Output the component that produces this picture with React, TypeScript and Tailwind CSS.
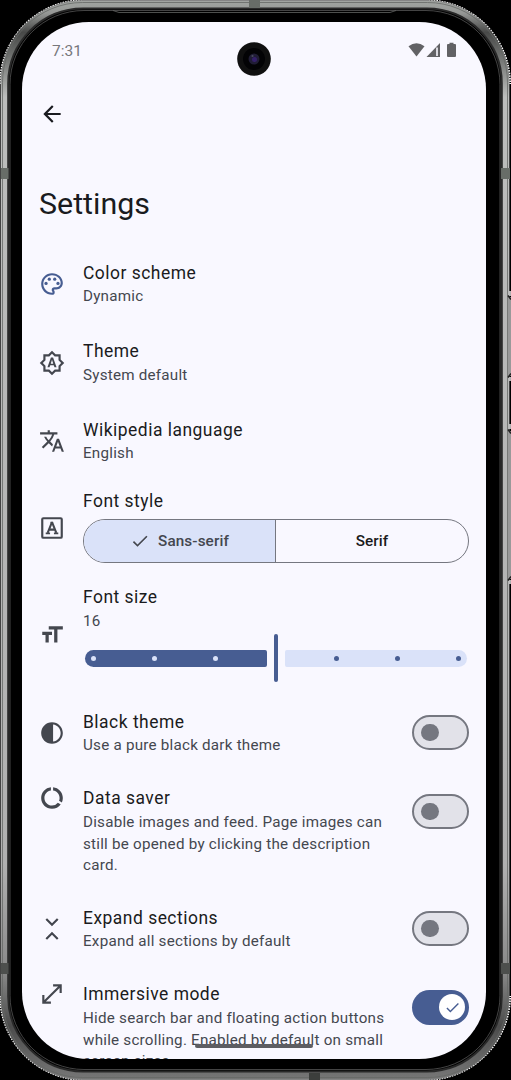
import React from "react";
import {
  MdOutlinePalette, MdOutlineBrightnessAuto, MdTranslate, MdContrast, MdDataUsage, MdArrowBack,
  MdCheck, MdFormatSize,
} from "react-icons/md";

const ink = "text-[#44474f]";

function FontBoxIcon() {
  return (
    <svg viewBox="0 0 24 24" className={`size-[26px] ${ink}`} fill="none" stroke="currentColor">
      <rect x="3" y="3" width="18" height="18" rx="1" strokeWidth="2" />
      <path d="M12 6.6 8 16.6M12 6.6l4 10M9.4 13.5h5.2" strokeWidth="1.9" />
      <path d="M6.2 17h4M13.8 17h4M10.6 7H13" strokeWidth="1.5" />
    </svg>
  );
}

function CollapseIcon() {
  return (
    <svg viewBox="0 0 24 24" className={`size-[26px] ${ink}`} fill="none" stroke="currentColor" strokeWidth="2">
      <path d="M6.7 2.7 12 8l5.3-5.3M6.7 21.3 12 16l5.3 5.3" />
    </svg>
  );
}

function FullscreenIcon() {
  return (
    <svg viewBox="0 0 24 24" className={`size-[26px] ${ink}`} fill="currentColor">
      <path d="M3 21v-8h2v4.6L17.6 5H13V3h8v8h-2V6.4L6.4 19H11v2z" />
    </svg>
  );
}

function Bezel() {
  return (
    <svg className="absolute inset-0" width="511" height="1080" viewBox="0 0 511 1080" fill="none">
      <defs>
        <linearGradient id="metal" x1="0" y1="0" x2="0" y2="1080" gradientUnits="userSpaceOnUse">
          <stop offset="0" stopColor="#a1a5a1" />
          <stop offset="0.012" stopColor="#969896" />
          <stop offset="0.03" stopColor="#484948" />
          <stop offset="0.055" stopColor="#747674" />
          <stop offset="0.09" stopColor="#bcbdbc" />
          <stop offset="0.8" stopColor="#b0b0b0" />
          <stop offset="0.9" stopColor="#898989" />
          <stop offset="0.95" stopColor="#4b4b4b" />
          <stop offset="1" stopColor="#777" />
        </linearGradient>
      </defs>
      <rect width="511" height="1080" fill="#000" />
      <path
        d="M0.6 84A83.5 83.5 0 0 1 84 0.6M426 0.6A83.5 83.5 0 0 1 509.6 84M0.6 996A83.5 83.5 0 0 0 84 1079.4M426 1079.4A83.5 83.5 0 0 0 509.6 996"
        stroke="#fff" strokeWidth="2.8" strokeDasharray="1.6 1"
      />
      <rect x="0.5" y="0" width="509" height="1080" rx="83" fill="#858585" />
      <rect x="4.5" y="4.5" width="501" height="1071" rx="78" stroke="url(#metal)" strokeWidth="7" />
      <rect x="2.5" y="2.5" width="505" height="1075" rx="80" stroke="#666866" strokeWidth="0.8" />
      <rect x="8.2" y="8.5" width="493.6" height="1063" rx="75" fill="#000" stroke="#292929" strokeWidth="2" />
      <rect x="10" y="10.5" width="490" height="1059" rx="74" stroke="#626262" strokeWidth="0.7" />
      <path d="M113 10.5l6 2h271l6-2" stroke="#626462" strokeWidth="0.8" />
      <g fill="#686d68">
        <rect x="249" width="11" height="8" />
        <rect x="1" y="168" width="7.5" height="11" />
        <rect x="501" y="168" width="9" height="11" />
        <rect x="1" y="963" width="7.5" height="11" fill="#4d4f4d" />
        <rect x="501" y="963" width="9" height="11" fill="#4d4f4d" />
        <rect x="309" y="1073" width="11" height="7" fill="#3c3e3c" />
      </g>
      <path d="M510 291v5M510 377v4M510 424v5M510 580v4" stroke="#ddd" strokeWidth="1.6" />
      <rect x="508" y="297" width="3" height="79" fill="#999" />
      <rect x="508" y="431" width="3" height="148" fill="#999" />
      <path d="M508 295.5l3 4M508 377.5l3-4M508 429.5l3 4M508 580.5l3-4" stroke="#222" strokeWidth="1.5" />
    </svg>
  );
}

function StatusBar() {
  return (
    <div className="flex h-[56.6px] shrink-0 items-center justify-between pr-[29px] pl-[30px] text-[#77777b]">
      <span className="pt-px text-[15.5px] leading-5">7:31</span>
      <svg width="49" height="16" viewBox="0 0 49 16" fill="#626265">
        <path d="M0.5 4.3Q8.5-1.8 16.5 4.3L8.5 14.6z" />
        <path d="M18.5 15 32 1v14z" />
        <path d="M29 5.5V14" stroke="#f9f8ff" strokeWidth="1.6" />
        <path d="M40 2h1.5V.8h4V2H47q1 0 1 1v11q0 1-1 1h-7q-1 0-1-1V3q0-1 1-1z" />
      </svg>
    </div>
  );
}

function Switch({ on = false }: { on?: boolean }) {
  return on ? (
    <div className="flex h-[35px] w-[57px] items-center justify-end rounded-full bg-[#475d92] pr-1">
      <div className="flex size-[26px] items-center justify-center rounded-full bg-white">
        <MdCheck className="size-[17px] text-[#475d92]" />
      </div>
    </div>
  ) : (
    <div className="flex h-[35px] w-[57px] items-center rounded-full border-2 border-[#757780] bg-[#e2e2e9] pl-[7px]">
      <div className="size-[17.5px] rounded-full bg-[#757780]" />
    </div>
  );
}

function Title({ children }: { children: React.ReactNode }) {
  return <div className="text-[17.45px] leading-[26.4px] tracking-[0.5px] whitespace-nowrap text-[#1a1b20]">{children}</div>;
}

function Sub({ children }: { children: React.ReactNode }) {
  return <div className="text-[15.2px] leading-[21.9px] tracking-[0.23px] whitespace-nowrap text-[#44474f]">{children}</div>;
}

interface RowProps {
  icon: React.ReactNode;
  title: string;
  lines: string[];
  height: string;
  top?: boolean;
  toggle?: "on" | "off";
}

function Row({ icon, title, lines, height, top, toggle }: RowProps) {
  return (
    <div className={`flex shrink-0 pr-[17px] pl-[17px] ${height} ${top ? "items-start" : "items-center"}`}>
      <div className="w-[44px] shrink-0">{icon}</div>
      <div className="flex-1">
        <Title>{title}</Title>
        {lines.map((l) => <Sub key={l}>{l}</Sub>)}
      </div>
      {toggle && <div className={top ? "pt-[8.6px]" : ""}><Switch on={toggle === "on"} /></div>}
    </div>
  );
}

function FontStyle() {
  return (
    <div className="flex h-[98px] shrink-0 items-start px-[17px] pt-[7.6px]">
      <div className="w-[44px] shrink-0 pt-[27px]"><FontBoxIcon /></div>
      <div className="flex-1">
        <Title>Font style</Title>
        <div className="mt-[4.6px] flex h-[44px] w-[386px] overflow-hidden rounded-full border border-[#757780] text-[15.27px] font-medium tracking-[0.109px]">
          <div className="flex w-[192px] items-center justify-center gap-[8px] border-r border-[#757780] bg-[#dae2f9] text-[#44474f]">
            <MdCheck className="size-[20px]" />
            <span className="pt-px">Sans-serif</span>
          </div>
          <div className="flex flex-1 items-center justify-center pt-px text-[#1a1b20]">Serif</div>
        </div>
      </div>
    </div>
  );
}

function Dots({ color }: { color: string }) {
  return (
    <>
      <i className={`size-[5px] shrink-0 rounded-full ${color}`} />
      <i className={`size-[5px] shrink-0 rounded-full ${color}`} />
      <i className={`size-[5px] shrink-0 rounded-full ${color}`} />
    </>
  );
}

function FontSize() {
  return (
    <div className="flex h-[115.4px] shrink-0 items-start px-[17px] pt-[6.2px]">
      <div className="w-[44px] shrink-0 pt-[37.3px]"><MdFormatSize className={`size-[26px] ${ink}`} /></div>
      <div className="flex-1">
        <Title>Font size</Title>
        <Sub>16</Sub>
        <div className="mt-[1.5px] flex h-[48px] w-[386px] items-center gap-[6.5px] px-[2px]">
          <div className="flex h-[17.5px] w-[182.5px] items-center gap-[55.8px] rounded-l-[9px] rounded-r-[2px] bg-[#475d92] pl-[6px]">
            <Dots color="bg-[#dae2f9]" />
          </div>
          <div className="h-[48px] w-[4.4px] rounded-full bg-[#475d92]" />
          <div className="flex h-[17.5px] w-[182.5px] items-center justify-end gap-[55.8px] rounded-l-[2px] rounded-r-[9px] bg-[#dae2f9] pr-[6px]">
            <Dots color="bg-[#475d92]" />
          </div>
        </div>
      </div>
    </div>
  );
}

export default function App() {
  return (
    <div className="relative h-[1080px] w-[511px] overflow-hidden bg-black pt-[22px] pl-[22px] font-['Roboto',sans-serif]">
      <Bezel />
      <div className="relative flex h-[1037px] w-[464px] flex-col overflow-hidden rounded-[67px] bg-[#f9f8ff]">
        <StatusBar />
        <div className="flex h-[70px] shrink-0 items-center pl-[17px]">
          <MdArrowBack className="size-[26px] text-[#1a1b20]" />
        </div>
        <h1 className="h-[84px] shrink-0 pt-[35px] pl-[17px] text-[30.4px] leading-[40px] text-[#1a1b20]">Settings</h1>
        <div className="h-[12.2px] shrink-0" />
        <Row height="h-[78.5px]" icon={<MdOutlinePalette className="size-[26px] text-[#475d92]" />} title="Color scheme" lines={["Dynamic"]} />
        <Row height="h-[78.5px]" icon={<MdOutlineBrightnessAuto className={`size-[26px] ${ink}`} />} title="Theme" lines={["System default"]} />
        <Row height="h-[78.5px]" icon={<MdTranslate className={`size-[26px] ${ink}`} />} title="Wikipedia language" lines={["English"]} />
        <FontStyle />
        <FontSize />
        <Row height="h-[78px]" icon={<MdContrast className={`size-[26px] ${ink}`} />} title="Black theme" lines={["Use a pure black dark theme"]} toggle="off" />
        <Row height="h-[118px] pt-[13.6px]" top icon={<MdDataUsage className={`size-[26px] ${ink}`} />} title="Data saver" lines={["Disable images and feed. Page images can", "still be opened by clicking the description", "card."]} toggle="off" />
        <Row height="h-[78px]" icon={<CollapseIcon />} title="Expand sections" lines={["Expand all sections by default"]} toggle="off" />
        <Row height="h-[118px] pt-[13.6px]" top icon={<FullscreenIcon />} title="Immersive mode" lines={["Hide search bar and floating action buttons", "while scrolling. Enabled by default on small", "screen sizes"]} toggle="on" />
        <div className="absolute bottom-[11px] left-[173px] h-[4.5px] w-[118px] rounded-full bg-[#5d5d62]" />
        <svg className="absolute top-[20px] left-[215px]" width="34" height="34" viewBox="0 0 34 34">
          <circle cx="17" cy="17" r="16.8" fill="#101010" />
          <circle cx="17" cy="17" r="11" fill="#030305" />
          <circle cx="17" cy="17" r="5.5" fill="#201d35" />
          <circle cx="17.5" cy="17.5" r="2.5" fill="#34206a" />
          <circle cx="15.5" cy="14" r="1.1" fill="#4a4d60" />
        </svg>
      </div>
    </div>
  );
}
